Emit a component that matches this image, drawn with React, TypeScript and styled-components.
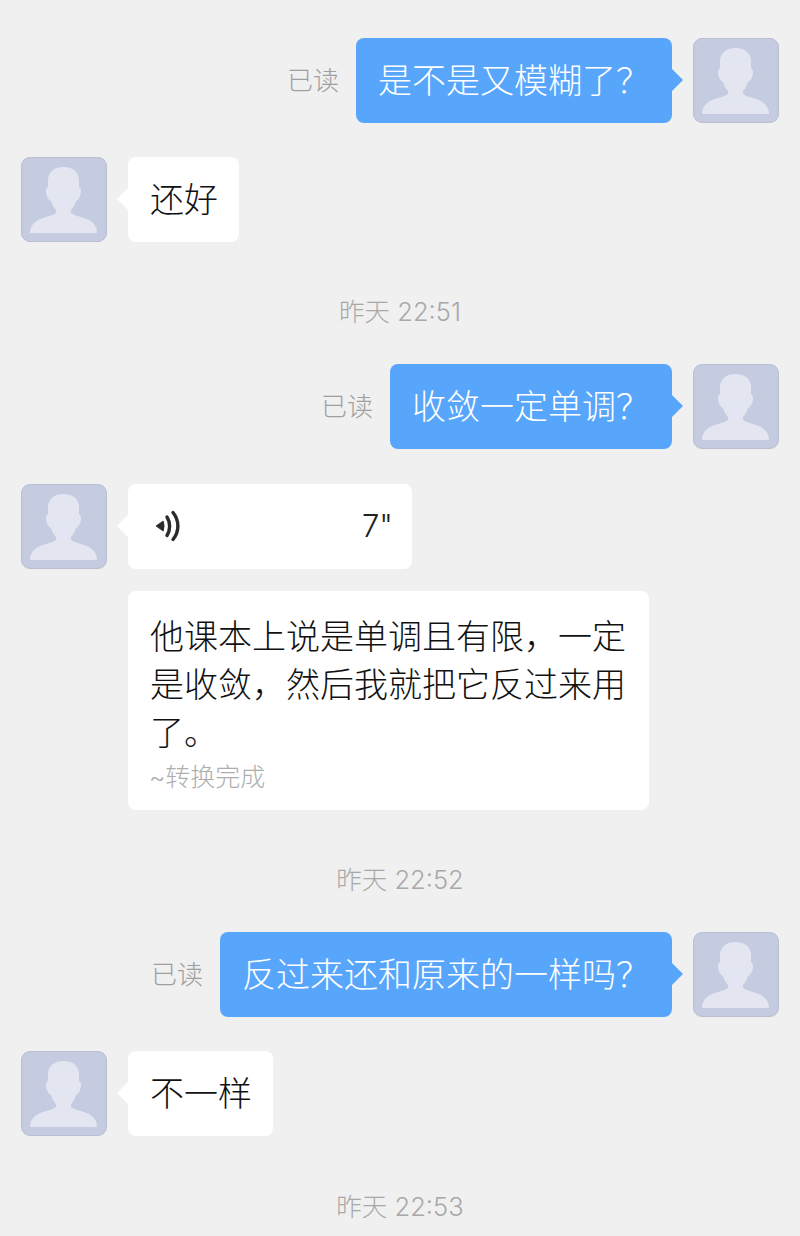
import styled, { createGlobalStyle } from 'styled-components'

const GlobalStyle = createGlobalStyle`
  html, body {
    margin: 0;
    padding: 0;
    background-color: #f0f0f0;
  }
  body {
    font-family: Inter, "Noto Sans CJK SC", sans-serif;
  }
`

const Page = styled.div`
  width: 800px;
  height: 1236px;
  overflow: hidden;
  padding: 38px 21px 0;
  box-sizing: border-box;
  display: flex;
  flex-direction: column;
`
const Row = styled.div<{ $mine?: boolean; $gap?: number }>`
  display: flex;
  align-items: flex-start;
  justify-content: ${props => (props.$mine ? 'flex-end' : 'flex-start')};
  gap: 21px;
  margin-bottom: ${props => props.$gap ?? 0}px;
`
const MineGroup = styled.div`
  display: flex;
  align-items: center;
  gap: 17px;
`
const ReadMark = styled.span`
  font-size: 26px;
  font-weight: 300;
  line-height: 32px;
  color: #9f9f9f;
`
const Stack = styled.div`
  display: flex;
  flex-direction: column;
  gap: 22px;
`
const Bubble = styled.div<{ $mine?: boolean; $tail?: boolean }>`
  position: relative;
  box-sizing: border-box;
  min-height: 85px;
  padding: 19px ${props => (props.$mine ? 22 : 21)}px 18px 22px;
  border-radius: 8px;
  font-size: 34px;
  font-weight: 300;
  line-height: 48px;
  color: ${props => (props.$mine ? '#fff' : '#111')};
  background-color: ${props => (props.$mine ? '#58a6fb' : '#fff')};

  ${props =>
    props.$tail
      ? `&::after {
    content: '';
    position: absolute;
    top: 31px;
    ${props.$mine ? 'right: -11px;' : 'left: -11px;'}
    width: 0;
    height: 0;
    border-top: 11px solid transparent;
    border-bottom: 11px solid transparent;
    ${props.$mine ? 'border-left: 11px solid #58a6fb;' : 'border-right: 11px solid #fff;'}
  }`
      : ''}
`
const VoiceBubble = styled(Bubble)`
  width: 284px;
  display: flex;
  align-items: center;
  justify-content: space-between;
  padding: 18px 19px 19px 27px;
`
const TextBubble = styled(Bubble)`
  width: 521px;
  height: 219px;
  padding: 22px 22px 0;
`
const Duration = styled.span`
  font-size: 31px;
  font-weight: 300;
  color: #222;
`
const Hint = styled.div`
  font-size: 25px;
  font-weight: 300;
  line-height: 40px;
  color: #aeaeae;
  margin-left: -1px;
`
const Time = styled.div<{ $top?: number; $gap?: number }>`
  height: 30px;
  margin: ${props => props.$top ?? 55}px 0 ${props => props.$gap ?? 37}px;
  text-align: center;
  font-size: 25.5px;
  font-weight: 300;
  line-height: 30px;
  color: #a8a8a8;
`
const AvatarBox = styled.div`
  flex: none;
  width: 86px;
  height: 85px;
  box-sizing: border-box;
  border: 1px solid #b9bed2;
  border-radius: 9px;
  background-color: #c5cbe0;
  overflow: hidden;

  svg {
    display: block;
  }
`

const Avatar = () => (
  <AvatarBox>
    <svg width="84" height="83" viewBox="0 0 84 83">
      <path
        fill="#e3e6f1"
        d="M41.500 9C33 9 27 13 26 21L26 29C23.500 30 23.500 35 25 38C26 41 27 42 29 43C30 47 32 50 34 52L34 55C30 58 22 59 16 62C11 65 8 69 8 75L75 75C75 69 72 65 67 62C61 59 53 58 49 55L49 52C51 50 53 47 54 43C56 42 57 41 58 38C59.500 35 59.500 30 57 29L57 21C56 13 50 9 41.500 9Z"
      />
    </svg>
  </AvatarBox>
)

const VoiceIcon = () => (
  <svg width="26" height="32" viewBox="0 0 26 32">
    <path
      fill="#2b2b2b"
      stroke="#2b2b2b"
      strokeWidth="1.500"
      strokeLinejoin="round"
      d="M1.500 16 8 11.500c1 3 1 6 0 9z"
    />
    <path
      fill="none"
      stroke="#2b2b2b"
      strokeWidth="3.400"
      strokeLinecap="round"
      d="M12 7c3.500 5.500 3.500 13 0 18.500"
    />
    <path
      fill="none"
      stroke="#2b2b2b"
      strokeWidth="3.400"
      strokeLinecap="round"
      d="M18 2.500c6.500 8 6.500 19 0 27"
    />
  </svg>
)

const Mine = ({ text, gap }: { text: string; gap?: number }) => (
  <Row $mine $gap={gap}>
    <MineGroup>
      <ReadMark>已读</ReadMark>
      <Bubble $mine $tail>
        {text}
      </Bubble>
    </MineGroup>
    <Avatar />
  </Row>
)

const App = () => {
  return (
    <>
      <GlobalStyle />
      <Page>
        <Mine text="是不是又模糊了？" gap={34} />
        <Row>
          <Avatar />
          <Bubble $tail>还好</Bubble>
        </Row>
        <Time>昨天 22:51</Time>
        <Mine text="收敛一定单调？" gap={35} />
        <Row>
          <Avatar />
          <Stack>
            <VoiceBubble $tail>
              <VoiceIcon />
              <Duration>7"</Duration>
            </VoiceBubble>
            <TextBubble>
              他课本上说是单调且有限，一定是收敛，然后我就把它反过来用了。
              <Hint>~转换完成</Hint>
            </TextBubble>
          </Stack>
        </Row>
        <Time>昨天 22:52</Time>
        <Mine text="反过来还和原来的一样吗？" gap={34} />
        <Row>
          <Avatar />
          <Bubble $tail>不一样</Bubble>
        </Row>
        <Time $top={56}>昨天 22:53</Time>
      </Page>
    </>
  )
}

export default App
